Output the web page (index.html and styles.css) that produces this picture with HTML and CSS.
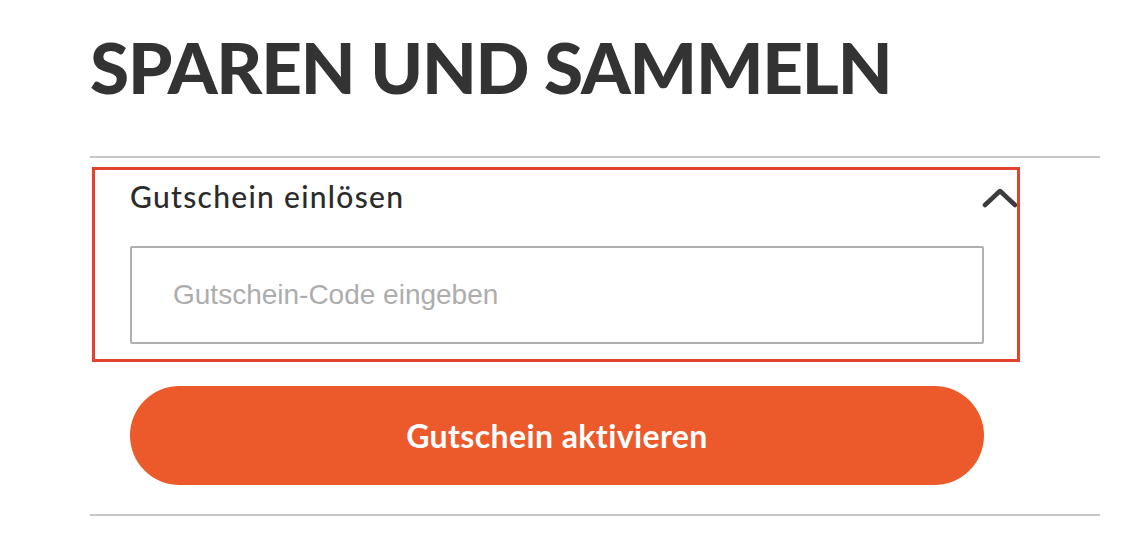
FILE: index.html
```html
<!DOCTYPE html>
<html lang="de">
	<head>
		<meta charset="utf-8"/>
		<title>Sparen und Sammeln</title>
		<link rel="stylesheet" href="styles.css">
	</head>
	<body>
		<div class="page">
			<h1 class="title">SPAREN UND SAMMELN</h1>
			<div class="voucher">
				<div class="voucher-head">
					<span class="voucher-label">Gutschein einlösen</span>
					<svg class="chevron" width="36" height="20" viewBox="0 0 36 20">
						<path d="M3 17 L18 3 L33 17" fill="none" stroke="#3c3c3c" stroke-width="4.5" stroke-linecap="round" stroke-linejoin="round"/>
					</svg>
				</div>
				<input class="voucher-input" type="text" placeholder="Gutschein-Code eingeben">
				<button class="voucher-btn">Gutschein aktivieren</button>
				<div class="highlight"></div>
			</div>
		</div>
	</body>
</html>
```
FILE: styles.css
```css
body {
	margin: 0;
	background-color: #ffffff;
	font-family: Lato, "Open Sans", sans-serif;
	color: #333333;
}
.page {
	padding-left: 90px;
	width: 1010px;
}
.title {
	margin: 0;
	padding: 26px 0 48px 0;
	font-size: 71px;
	font-weight: 900;
	line-height: 82px;
	letter-spacing: -1.2px;
	color: #333333;
}
.voucher {
	position: relative;
	border-top: 2px solid #c8c8c8;
	border-bottom: 2px solid #c8c8c8;
	padding: 18px 116px 29px 40px;
}
.voucher-head {
	display: flex;
	justify-content: space-between;
	align-items: center;
	height: 40px;
	margin-right: -36px;
	margin-bottom: 30px;
}
.voucher-label {
	font-size: 30px;
	font-weight: 500;
	letter-spacing: 1.3px;
	color: #2b2b2b;
}
.chevron {
	margin-right: 2px;
	margin-top: 4px;
}
.voucher-input {
	display: block;
	box-sizing: border-box;
	width: 100%;
	height: 98px;
	margin: 0 0 42px 0;
	padding: 0 41px;
	border: 2px solid #b0b0b0;
	border-radius: 2px;
	font-family: "Liberation Sans", Arial, sans-serif;
	font-size: 28px;
	color: #333333;
	outline: none;
}
.voucher-input::placeholder {
	color: #adadad;
}
.voucher-btn {
	display: block;
	width: 100%;
	height: 99px;
	border: none;
	border-radius: 50px;
	background-color: #ec5a2b;
	color: #ffffff;
	font-family: Lato, "Open Sans", sans-serif;
	font-size: 32px;
	font-weight: 700;
	letter-spacing: 0.4px;
	cursor: pointer;
}
.highlight {
	position: absolute;
	left: 2px;
	top: 9px;
	width: 922px;
	height: 189px;
	border: 3px solid #e3432c;
	pointer-events: none;
}
```
